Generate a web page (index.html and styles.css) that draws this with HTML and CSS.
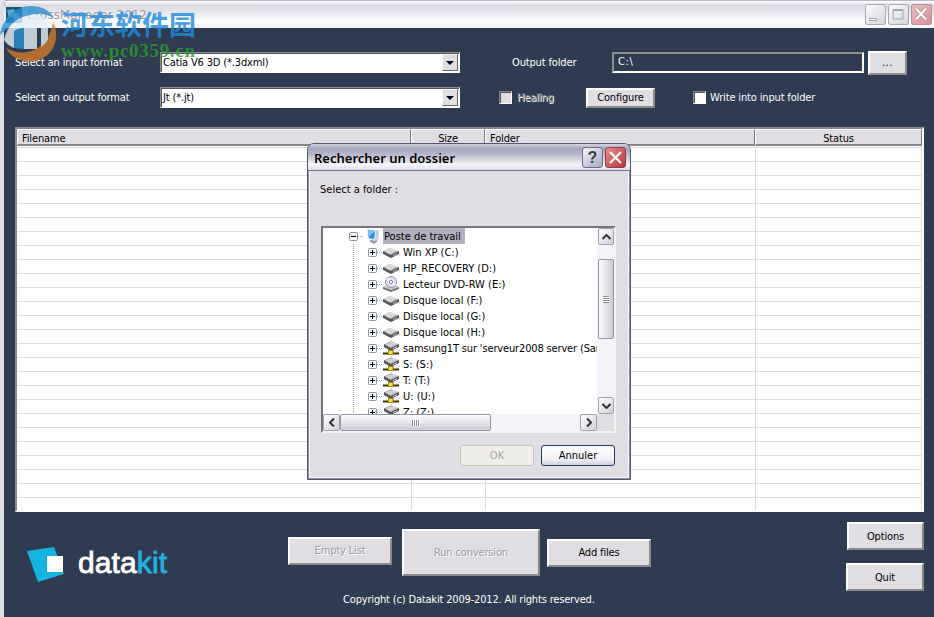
FILE: index.html
```html
<!DOCTYPE html>
<html lang="en">
<head>
    <meta charset="UTF-8">
    <title>CrossManager 2012</title>
    <link rel="stylesheet" href="styles.css">
</head>
<body>
    <!-- shared icons -->
    <svg class="defs" width="0" height="0">
        <defs>
            <linearGradient id="diskTop" x1="0" y1="0" x2="1" y2="1">
                <stop offset="0" stop-color="#8b8b8b"/>
                <stop offset="0.5" stop-color="#dcdcdc"/>
                <stop offset="1" stop-color="#8a8a8a"/>
            </linearGradient>
            <symbol id="disk" viewBox="0 0 16 16">
                <path d="M0 7v3l8 4 8-4V7z" fill="#555"/>
                <path d="M0 7.2L7 4l9 3-8 4z" fill="url(#diskTop)"/>
                <path d="M3 7l4-1.8 4 1.4" stroke="#eee" fill="none"/>
                <path d="M10 11.7l4-2" stroke="#bbb"/>
            </symbol>
            <symbol id="netdisk" viewBox="0 0 16 16">
                <path d="M1 4v3l7 4 8-4V4z" fill="#555"/>
                <path d="M1 4.2L8 1l8 3-8 4z" fill="url(#diskTop)"/>
                <path d="M10 8.7l4-2" stroke="#ccc"/>
                <path d="M0 12.5h16v2H0z" fill="#333"/>
                <path d="M0 12.5h16" stroke="#b59a32"/>
                <rect x="5.5" y="10.5" width="4.5" height="4" fill="#ffdf4a" stroke="#a98510"/>
            </symbol>
            <symbol id="dvd" viewBox="0 0 16 16">
                <path d="M0 11v2l8 3 8-3v-2l-8-3z" fill="#777"/>
                <path d="M0 11l6-3 10 3-8 3z" fill="#ccc"/>
                <ellipse cx="8" cy="6" rx="5.5" ry="5.5" fill="#e1e1ee" stroke="#9393a5"/>
                <path d="M8 6L4 3M8 6l4 3" stroke="#fff" stroke-width="2"/>
                <circle cx="8" cy="6" r="1.6" fill="#fff" stroke="#7b7bb5"/>
            </symbol>
            <symbol id="computer" viewBox="0 0 16 16">
                <path d="M4 13l5-2 4 2-4 3z" fill="#8e96b4"/>
                <path d="M11 2l3 1-1 9-3 1z" fill="#c5cbdb"/>
                <path d="M2 1l9 1-1 11-7-2z" fill="#d7e6f5"/>
                <path d="M3 2l7 1-1 8-5-1z" fill="#2b8ce4"/>
                <path d="M3 2l7 1-4 4-2 1z" fill="#75c5fa"/>
            </symbol>
            <symbol id="plus" viewBox="0 0 9 9">
                <rect x="0.5" y="0.5" width="8" height="8" rx="1" fill="#f7f7f7" stroke="#8795aa"/>
                <path d="M2 4.5h5M4.5 2v5" stroke="#000"/>
            </symbol>
            <symbol id="minus" viewBox="0 0 9 9">
                <rect x="0.5" y="0.5" width="8" height="8" rx="1" fill="#f7f7f7" stroke="#8795aa"/>
                <path d="M2 4.5h5" stroke="#000"/>
            </symbol>
        </defs>
    </svg>

    <div class="window">
        <div class="titlebar">
            <svg class="app-icon" width="16" height="16" viewBox="0 0 16 16">
                <rect width="16" height="16" fill="#14557f"/>
                <path d="M1 3l7-1 2 7-7 2z" fill="#5fa9cd"/>
                <path d="M7 7l6-1 1 7-6 1z" fill="#8ec5dd"/>
            </svg>
            <span class="app-title">CrossManager 2012</span>
            <div class="window-buttons">
                <span class="win-btn"><svg width="21" height="21"><path d="M4.500 14.500h7v2h-7z" fill="#fff" stroke="#a3a3ae"/></svg></span>
                <span class="win-btn"><svg width="21" height="21"><path d="M5 5.500h10v9.500H5z" fill="none" stroke="#a3a3ae"/><path d="M5 6h10" stroke="#a3a3ae" stroke-width="2"/></svg></span>
                <span class="win-btn close"><svg width="21" height="21"><path d="M5 4.500l10 11M15 4.500l-10 11" stroke="#b28b94" stroke-width="4"/><path d="M5 4.500l10 11M15 4.500l-10 11" stroke="#fff" stroke-width="2.200"/></svg></span>
            </div>
        </div>

        <div class="client">
            <div class="form-row">
                <span class="form-label">Select an input format</span>
                <div class="select"><span>Catia V6 3D (*.3dxml)</span><i class="drop"></i></div>
                <span class="output-label">Output folder</span>
                <div class="folder-input">C:\</div>
                <button class="btn browse">...</button>
            </div>
            <div class="form-row second">
                <span class="form-label">Select an output format</span>
                <div class="select"><span>Jt (*.jt)</span><i class="drop"></i></div>
                <span class="checkbox off"></span>
                <span class="healing">Healing</span>
                <button class="btn configure">Configure</button>
                <span class="checkbox"></span>
                <span class="write-label">Write into input folder</span>
            </div>

            <div class="file-table">
                <div class="table-head">
                    <span>Filename</span>
                    <span class="center">Size</span>
                    <span>Folder</span>
                    <span class="center">Status</span>
                </div>
                <div class="table-body">
                    <span></span><span></span><span></span><span></span>
                </div>
            </div>

            <div class="bottom">
                <div class="logo">
                    <svg width="38" height="36" viewBox="0 0 38 36">
                        <path d="M0 4l27-4 10 27-26 8z" fill="#16b4e0"/>
                        <rect x="20" y="9" width="16" height="16" fill="#fff"/>
                    </svg>
                    <span class="logo-text">data<b>kit</b></span>
                </div>
                <div class="actions">
                    <div class="action-row">
                        <button class="btn disabled empty">Empty List</button>
                        <button class="btn disabled run">Run conversion</button>
                        <button class="btn add">Add files</button>
                    </div>
                    <p class="copyright">Copyright (c) Datakit 2009-2012. All rights reserved.</p>
                </div>
                <div class="side">
                    <button class="btn options">Options</button>
                    <button class="btn quit">Quit</button>
                </div>
            </div>
        </div>
    </div>

    <div class="dialog">
        <div class="dialog-title">
            <span class="dialog-name">Rechercher un dossier</span>
            <span class="dlg-btn">?</span>
            <span class="dlg-btn red"><svg width="19" height="19"><path d="M4 4l11 11M15 4L4 15" stroke="#fff" stroke-width="2.200"/></svg></span>
        </div>
        <div class="dialog-body">
            <p class="prompt">Select a folder :</p>
            <div class="tree-box">
                <div class="tree">
                    <div class="node root"><svg class="box"><use href="#minus"/></svg><i></i><svg class="icon"><use href="#computer"/></svg><span class="selected">Poste de travail</span></div>
                    <div class="children">
                        <div class="node"><svg class="box"><use href="#plus"/></svg><i></i><svg class="icon"><use href="#disk"/></svg><span>Win XP (C:)</span></div>
                        <div class="node"><svg class="box"><use href="#plus"/></svg><i></i><svg class="icon"><use href="#disk"/></svg><span>HP_RECOVERY (D:)</span></div>
                        <div class="node"><svg class="box"><use href="#plus"/></svg><i></i><svg class="icon"><use href="#dvd"/></svg><span>Lecteur DVD-RW (E:)</span></div>
                        <div class="node"><svg class="box"><use href="#plus"/></svg><i></i><svg class="icon"><use href="#disk"/></svg><span>Disque local (F:)</span></div>
                        <div class="node"><svg class="box"><use href="#plus"/></svg><i></i><svg class="icon"><use href="#disk"/></svg><span>Disque local (G:)</span></div>
                        <div class="node"><svg class="box"><use href="#plus"/></svg><i></i><svg class="icon"><use href="#disk"/></svg><span>Disque local (H:)</span></div>
                        <div class="node"><svg class="box"><use href="#plus"/></svg><i></i><svg class="icon"><use href="#netdisk"/></svg><span class="long">samsung1T sur 'serveur2008 server (Sam</span></div>
                        <div class="node"><svg class="box"><use href="#plus"/></svg><i></i><svg class="icon"><use href="#netdisk"/></svg><span>S: (S:)</span></div>
                        <div class="node"><svg class="box"><use href="#plus"/></svg><i></i><svg class="icon"><use href="#netdisk"/></svg><span>T: (T:)</span></div>
                        <div class="node"><svg class="box"><use href="#plus"/></svg><i></i><svg class="icon"><use href="#netdisk"/></svg><span>U: (U:)</span></div>
                        <div class="node"><svg class="box"><use href="#plus"/></svg><i></i><svg class="icon"><use href="#netdisk"/></svg><span>Z: (Z:)</span></div>
                    </div>
                </div>
                <div class="vscroll">
                    <span class="arrow"><svg width="9" height="6"><path d="M0.500 5l4-4 4 4" fill="none" stroke="#333" stroke-width="2"/></svg></span>
                    <span class="vthumb"><i></i></span>
                    <span class="arrow"><svg width="9" height="6"><path d="M0.500 1l4 4 4-4" fill="none" stroke="#333" stroke-width="2"/></svg></span>
                </div>
                <div class="hscroll">
                    <span class="arrow"><svg width="6" height="9"><path d="M5 0.500l-4 4 4 4" fill="none" stroke="#333" stroke-width="2"/></svg></span>
                    <span class="hthumb"><i></i></span>
                    <span class="arrow end"><svg width="6" height="9"><path d="M1 0.500l4 4-4 4" fill="none" stroke="#333" stroke-width="2"/></svg></span>
                </div>
            </div>
            <div class="dialog-actions">
                <button class="xp-btn off">OK</button>
                <button class="xp-btn">Annuler</button>
            </div>
        </div>
    </div>

    <div class="watermark">
        <svg width="57" height="58" viewBox="0 0 57 58">
            <path d="M0 30C2 14 15 1 31 1c11 0 18 4 23 12-9-5-19-6-28-1C14 17 10 22 0 30z" fill="#2b8fd0"/>
            <path d="M53 17c7 15 2 31-12 37-13 6-29 1-35-11 9 5 19 6 28 2 11-5 17-15 19-28z" fill="#d17a2b"/>
            <path d="M4 35c3-15 14-24 27-25v34h-7V23c-7 2-10 7-10 15v5c-5-2-8-5-10-8z" fill="#e4f0f7"/>
            <path d="M14 26c3-2 6-3 10-3v21l-10-1z" fill="#2b8fd0"/>
            <path d="M31 10c7-1 12 1 17 6v18c-2 4-4 6-7 8V21l-4-2v25h-6z" fill="#e4f0f7"/>
        </svg>
        <div class="watermark-text">
            <span class="cn">河东软件园</span>
            <span class="url">www.pc0359.cn</span>
        </div>
    </div>
</body>
</html>
```
FILE: styles.css
```css
* { margin: 0; padding: 0; box-sizing: border-box; }

body {
    width: 934px;
    height: 617px;
    overflow: hidden;
    position: relative;
    font-family: Tahoma, "DejaVu Sans Condensed", "DejaVu Sans", sans-serif;
    font-stretch: condensed;
    font-size: 11px;
    line-height: 14px;
    letter-spacing: -0.15px;
    color: #000;
    background: #e8e8ef;
    white-space: nowrap;
}

.defs { position: absolute; }
svg { display: block; flex: none; }

.window {
    height: 617px;
    border-left: 4px solid #dedee8;
    border-radius: 7px 0 0 0;
    overflow: hidden;
    background: #2e3b50;
}

.titlebar {
    height: 28px;
    display: flex;
    align-items: center;
    padding: 0 2px;
    border-top: 1px solid #b9b9c6;
    background: linear-gradient(#fff 0, #d9d9e3 15%, #e5e5ee 40%, #fff 75%, #f4f4f8 100%);
}

.app-title {
    flex: 1;
    margin-left: 5px;
    font-size: 13px;
    letter-spacing: 0.2px;
    color: #9b9ba3;
}

.window-buttons { display: flex; gap: 2px; }

.win-btn {
    width: 21px;
    height: 21px;
    border-radius: 3px;
    box-shadow: inset 0 0 0 1px #a9a9b8;
    background: linear-gradient(135deg, #fff, #d2d2de);
}

.win-btn.close {
    background: linear-gradient(135deg, #e8bfc3, #d78d92);
    box-shadow: inset 0 0 0 1px #b9939b;
}

.client { padding: 24px 10px 0 11px; height: 589px; }

.form-row {
    display: flex;
    align-items: center;
    height: 21px;
    color: #fff;
}

.form-row.second { margin-top: 14px; }
.form-label { width: 145px; }

.select {
    width: 300px;
    height: 21px;
    display: flex;
    align-items: center;
    justify-content: space-between;
    background: #fff;
    color: #000;
    padding-left: 2px;
    border: 1px solid #8d8d92;
    border-right-color: #fff;
    border-bottom-color: #fff;
    box-shadow: inset 1px 1px #55555a;
}

.drop {
    width: 16px;
    height: 17px;
    margin-right: 1px;
    display: flex;
    align-items: center;
    justify-content: center;
    background: #e0dee3;
    border: 1px solid #f5f5f7;
    border-right-color: #66666b;
    border-bottom-color: #66666b;
}

.drop::after {
    content: "";
    border: 4px solid transparent;
    border-top-color: #000;
    border-bottom: 0;
}

.output-label { width: 100px; margin-left: 52px; }

.folder-input {
    width: 252px;
    height: 21px;
    padding: 1px 4px;
    border: 2px solid #fff;
    border-top-color: #8d8d92;
    border-left-color: #8d8d92;
    letter-spacing: 0.6px;
}

.btn {
    font: inherit;
    letter-spacing: inherit;
    color: #000;
    background: #e0dee3;
    border: 2px solid;
    border-color: #fff #8b8990 #8b8990 #fff;
    flex: none;
}

.browse {
    width: 39px;
    height: 24px;
    margin-left: 4px;
    letter-spacing: 0.6px;
}

.checkbox {
    width: 13px;
    height: 13px;
    background: #fff;
    border: 1px solid #fff;
    border-top-color: #88888c;
    border-left-color: #88888c;
    box-shadow: inset 1px 1px #55555a;
}

.checkbox.off { background: #e0dee3; margin-left: 39px; }

.healing {
    width: 69px;
    margin-left: 5px;
    padding-top: 1px;
    color: #8b8990;
    text-shadow: 1px 1px #fff;
}

.configure { width: 69px; height: 20px; margin-right: 38px; padding-top: 1px; }
.write-label { margin-left: 4px; }

.file-table {
    width: 909px;
    height: 385px;
    margin-top: 19px;
    border: 2px solid #fff;
    border-top-color: #88888c;
    border-left-color: #88888c;
    background: #fff;
    overflow: hidden;
}

.table-head, .table-body {
    display: grid;
    grid-template-columns: 394px 74px 270px 167px;
}

.table-head span {
    height: 17px;
    padding: 1px 4px 0;
    line-height: 15px;
    background: #e0dee3;
    border: 1px solid #fff;
    border-right-color: #77757b;
    border-bottom: 2px solid #88868c;
}

.table-head .center { text-align: center; }

.table-body {
    height: 364px;
    grid-template-columns: 395px 74px 270px 166px;
    margin-top: 1px;
    background: repeating-linear-gradient(#dcdce2 0 1px, #fff 1px 14px);
}

.table-body span { border-right: 1px solid #dcdce2; }

.bottom {
    display: flex;
    height: 105px;
}

.logo {
    display: flex;
    width: 273px;
    padding: 35px 0 0 12px;
}

.logo-text {
    margin: 1px 0 0 13px;
    font: 30px/30px "Liberation Sans", Arial, sans-serif;
    letter-spacing: 0.1px;
    color: #fff;
    -webkit-text-stroke: 0.8px currentColor;
}

.logo-text b { font-weight: normal; color: #22b2df; }

.actions { width: 363px; padding-top: 17px; }

.action-row {
    display: flex;
    align-items: center;
    height: 47px;
}

.empty { width: 104px; height: 28px; margin-bottom: 3px; }
.run { width: 138px; height: 47px; margin: 0 7px 0 10px; }
.add { width: 104px; height: 28px; }

.btn.disabled { color: #9b999f; text-shadow: 1px 1px #fff; }

.copyright {
    margin: 17px 0 0 55px;
    color: #fff;
    letter-spacing: -0.17px;
}

.side {
    flex: 1;
    display: flex;
    flex-direction: column;
    align-items: flex-end;
    padding: 10px 0 0;
    gap: 13px;
}

.options { width: 77px; height: 28px; padding-top: 1px; }
.quit { width: 78px; height: 28px; padding-top: 1px; }

/* folder picker */
.dialog {
    position: absolute;
    left: 307px;
    top: 143px;
    width: 324px;
    height: 337px;
    border: 1px solid #55556f;
    border-radius: 7px 7px 0 0;
    background: #e0dee3;
    box-shadow: inset 0 0 0 1px #8d8da6, inset 0 0 0 2px #f6f6fa;
    overflow: hidden;
    letter-spacing: 0;
}

.dialog-title {
    height: 27px;
    display: flex;
    align-items: center;
    padding: 0 4px 0 6px;
    gap: 2px;
    border-bottom: 1px solid #77778c;
    background: linear-gradient(#d4d4e2 0, #a5a5bf 18%, #b8b8cc 40%, #f6f6fa 80%, #dcdce8 100%);
}

.dialog-name {
    flex: 1;
    padding-top: 1px;
    font-family: "Trebuchet MS", "Noto Sans", sans-serif;
    font-stretch: normal;
    font-size: 13px;
    font-weight: 600;
}

.dlg-btn {
    width: 21px;
    height: 21px;
    border: 1px solid #6d6d87;
    border-radius: 3px;
    background: linear-gradient(135deg, #f5f5fa, #a7a7c2);
    font: bold 16px/19px "Liberation Sans", sans-serif;
    text-align: center;
    color: #3b3b50;
}

.dlg-btn.red {
    border-color: #8e3c46;
    background: linear-gradient(135deg, #e68e8c, #b9383c);
}

.dialog-body { padding: 12px 14px 0 13px; }
.prompt { margin-left: -1px; }

.tree-box {
    display: grid;
    grid-template-columns: 1fr 17px;
    grid-template-rows: 186px 17px;
    width: 295px;
    height: 207px;
    margin-top: 29px;
    border: 2px solid #f5f3ee;
    border-top-color: #77757b;
    border-left-color: #77757b;
    background: #fff;
}

.tree { overflow: hidden; padding-left: 26px; }

.node { display: flex; align-items: center; height: 16px; }

.box { width: 9px; height: 9px; }

.node i {
    flex: none;
    width: 6px;
    height: 1px;
    background: repeating-linear-gradient(90deg, #999 0 1px, transparent 1px 2px);
}

.icon { width: 16px; height: 16px; }

.node span {
    line-height: 16px;
    margin-left: 3px;
    padding: 1px 2px 0 1px;
}

.node .long { letter-spacing: -0.15px; }
.node.root i { margin-right: 1px; }

.node .selected {
    margin-left: 2px;
    background: #b2b0bf;
    padding: 1px 4px 0 1px;
    height: 16px;
    line-height: 15px;
}

.children {
    margin-left: 4px;
    padding-left: 15px;
    background: repeating-linear-gradient(#999 0 1px, transparent 1px 2px) 0 0 / 1px 100% no-repeat;
}

.vscroll {
    display: flex;
    flex-direction: column;
    align-items: flex-end;
    background: #f3f3f8;
}

.arrow {
    width: 16px;
    height: 17px;
    display: flex;
    align-items: center;
    justify-content: center;
    border: 1px solid #a0a0b0;
    border-radius: 2px;
    background: linear-gradient(135deg, #fff, #cfcfdb);
    flex: none;
}

.vthumb, .hthumb {
    display: flex;
    align-items: center;
    justify-content: center;
    border: 1px solid #9696a8;
    border-radius: 2px;
}

.vthumb {
    width: 16px;
    height: 80px;
    margin: 14px 0 auto;
    background: linear-gradient(90deg, #fff, #cbcbd8);
}

.vthumb i {
    width: 6px;
    height: 7px;
    background: repeating-linear-gradient(#8b8b9a 0 1px, #fff 1px 2px);
}

.hscroll { display: flex; background: #f3f3f8; }
.hscroll .arrow { width: 17px; }

.hthumb {
    width: 151px;
    height: 17px;
    background: linear-gradient(#fff, #cbcbd8);
}

.hthumb i {
    width: 8px;
    height: 6px;
    background: repeating-linear-gradient(90deg, #8b8b9a 0 1px, #fff 1px 2px);
}

.arrow.end { margin-left: auto; }

.tree-box::after { content: ""; background: #e0dee3; }

.dialog-actions {
    display: flex;
    justify-content: flex-end;
    gap: 7px;
    margin: 12px 1px 0 0;
}

.xp-btn {
    width: 74px;
    height: 21px;
    padding-top: 1px;
    font: inherit;
    color: #000;
    border: 1px solid #1f3c66;
    border-radius: 3px;
    background: linear-gradient(#fff, #f0f0f6 70%, #cfcfe0);
}

.xp-btn.off { color: #a5a39b; border-color: #c5c3bd; background: #efeeea; }

/* site stamp in the corner */
.watermark {
    position: absolute;
    left: 0;
    top: 5px;
    display: flex;
    opacity: 0.8;
}

.watermark-text { display: flex; flex-direction: column; margin: 3px 0 0 4px; }

.cn {
    font: bold 27px/31px "Noto Sans CJK SC", sans-serif;
    letter-spacing: 0;
    color: #1f8bdc;
}

.url {
    font: bold 19px/20px "Liberation Serif", serif;
    letter-spacing: 0.7px;
    margin-top: 2px;
    color: #2f9a32;
}
```
